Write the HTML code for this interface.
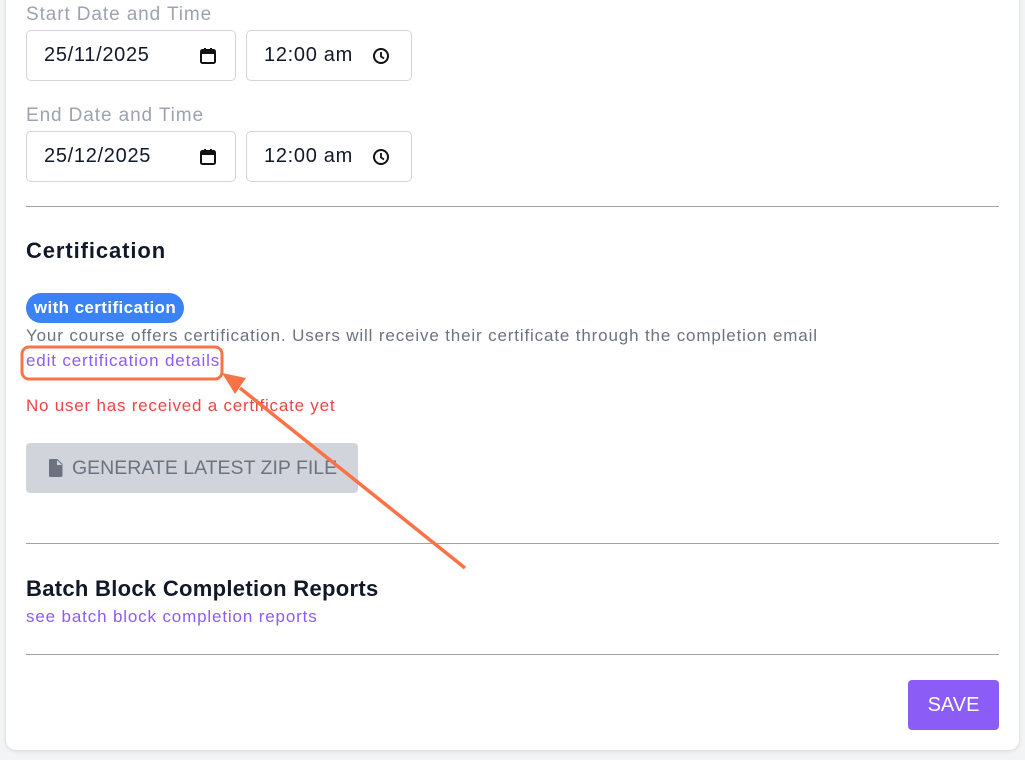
<!DOCTYPE html>
<html><head><meta charset="utf-8"><style>
*{box-sizing:border-box;margin:0;padding:0}
body{width:1025px;height:760px;background:#f3f4f6;font-family:"Liberation Sans",sans-serif;position:relative;overflow:hidden}
.card{position:absolute;left:6px;top:-10px;width:1013px;height:760px;background:#fff;border-radius:10px;box-shadow:0 1px 4px rgba(0,0,0,.12)}
.a{position:absolute}
.lbl{color:#9ca3af;font-size:19px;letter-spacing:.9px}
.inp{position:absolute;height:51px;border:1px solid #d1d5db;border-radius:5px;background:#fff;font-size:20px;color:#111827;padding-left:17px;line-height:49px;letter-spacing:.7px}
.hr{position:absolute;left:26px;width:973px;height:1px;background:#9ca3af}
h2{position:absolute;font-size:21px;font-weight:bold;color:#111827}
.link{color:#8b5cf6;font-size:17px;letter-spacing:.85px}
</style></head><body>
<div class="card"></div>
<div class="a lbl" style="left:26px;top:4px">Start Date and Time</div>
<div class="inp" style="left:26px;top:30px;width:210px">25/11/2025
<svg class="a" style="left:172px;top:16px" width="18" height="18" viewBox="0 0 18 18"><rect x="2" y="3" width="14" height="13" rx="1.5" fill="none" stroke="#111" stroke-width="2"/><rect x="2" y="3" width="14" height="4" fill="#111"/><rect x="5" y="1" width="2" height="3" fill="#111"/><rect x="11" y="1" width="2" height="3" fill="#111"/></svg></div>
<div class="inp" style="left:246px;top:30px;width:166px">12:00 am
<svg class="a" style="left:125px;top:16px" width="18" height="18" viewBox="0 0 18 18"><circle cx="9" cy="9" r="7" fill="none" stroke="#111" stroke-width="2"/><path d="M9 5v4.5l3 2" fill="none" stroke="#111" stroke-width="1.8"/></svg></div>
<div class="a lbl" style="left:26px;top:105px">End Date and Time</div>
<div class="inp" style="left:26px;top:131px;width:210px">25/12/2025
<svg class="a" style="left:172px;top:16px" width="18" height="18" viewBox="0 0 18 18"><rect x="2" y="3" width="14" height="13" rx="1.5" fill="none" stroke="#111" stroke-width="2"/><rect x="2" y="3" width="14" height="4" fill="#111"/><rect x="5" y="1" width="2" height="3" fill="#111"/><rect x="11" y="1" width="2" height="3" fill="#111"/></svg></div>
<div class="inp" style="left:246px;top:131px;width:166px">12:00 am
<svg class="a" style="left:125px;top:16px" width="18" height="18" viewBox="0 0 18 18"><circle cx="9" cy="9" r="7" fill="none" stroke="#111" stroke-width="2"/><path d="M9 5v4.5l3 2" fill="none" stroke="#111" stroke-width="1.8"/></svg></div>
<div class="hr" style="top:206px"></div>
<h2 style="left:26px;top:238px;font-size:22px;letter-spacing:.9px">Certification</h2>
<div class="a" style="left:26px;top:293px;width:158px;height:30px;border-radius:15px;background:#3b82f6;color:#fff;font-size:17px;line-height:30px;text-align:center;font-weight:bold;letter-spacing:.4px">with certification</div>
<div class="a" style="left:26px;top:326px;color:#6b7280;font-size:17px;letter-spacing:.85px">Your course offers certification. Users will receive their certificate through the completion email</div>
<div class="a link" style="left:26px;top:351px">edit certification details</div>
<div class="a" style="left:26px;top:396px;color:#ef4444;font-size:17px;letter-spacing:.78px">No user has received a certificate yet</div>
<div class="a" style="left:26px;top:443px;width:332px;height:50px;background:#d1d5db;border-radius:4px;color:#6b7280;font-size:19.5px;line-height:50px;padding-left:46px">GENERATE LATEST ZIP FILE
<svg class="a" style="left:23px;top:16px" width="14" height="18" viewBox="0 0 14 18"><path d="M1.5 0h7l5 5v11.5a1.5 1.5 0 0 1-1.5 1.5h-10.5a1.5 1.5 0 0 1-1.5-1.5v-15a1.5 1.5 0 0 1 1.5-1.5z M8 1v5h5" fill="#6b7280"/></svg></div>
<div class="hr" style="top:543px"></div>
<h2 style="left:26px;top:576px;font-size:22px;letter-spacing:.3px">Batch Block Completion Reports</h2>
<div class="a link" style="left:26px;top:607px">see batch block completion reports</div>
<div class="hr" style="top:654px"></div>
<div class="a" style="left:908px;top:680px;width:91px;height:50px;background:#8b5cf6;border-radius:4px;color:#fff;font-size:20px;line-height:50px;text-align:center">SAVE</div>
<svg class="a" style="left:0;top:0" width="1025" height="760">
<rect x="22" y="347" width="200" height="32" rx="7" fill="none" stroke="#f97347" stroke-width="3"/>
<line x1="465" y1="568" x2="240" y2="388" stroke="#f97347" stroke-width="3.5"/>
<polygon points="222,373 246,378 235,394" fill="#f97347"/>
</svg>
</body></html>
